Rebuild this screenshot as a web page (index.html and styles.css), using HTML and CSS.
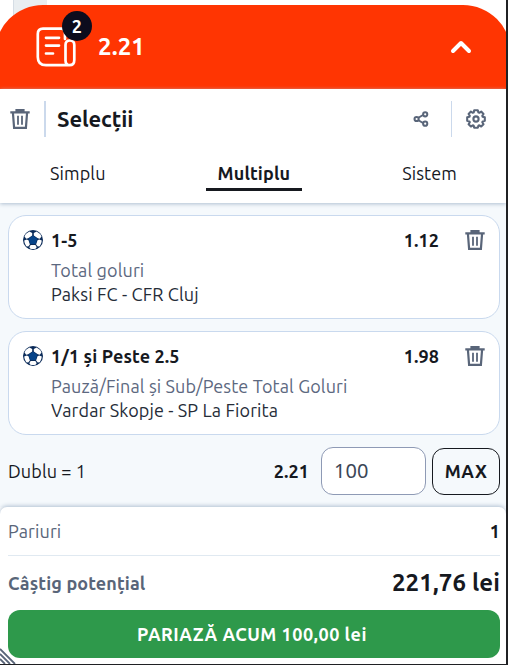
FILE: index.html
```
<!DOCTYPE html>
<html lang="ro">
<head>
    <meta charset="UTF-8">
    <meta name="viewport" content="width=device-width, initial-scale=1.0">
    <title>Bilet</title>
    <link rel="stylesheet" href="styles.css">
</head>
<body>
    <svg class="defs" width="0" height="0">
        <symbol id="trash" viewBox="0 0 20 20">
            <path d="M0.3 3.3H19.7M6.5 3V1.1H13.5V3M2.9 3.5L4.1 18.8H15.9L17.1 3.5" fill="none" stroke="currentColor" stroke-width="2.2"/>
            <path d="M8 6.8V15.8M12 6.8V15.8" fill="none" stroke="currentColor" stroke-width="1.8"/>
        </symbol>
        <symbol id="ball" viewBox="0 0 20 20">
            <circle cx="10" cy="10" r="10" fill="#0a2a58"/>
            <g fill="#fff">
                <path d="M10.8 3L13.6 1.5Q17 3.1 18.5 6.4L16.8 8.8L14.8 8.3L10.8 5.4Z"/>
                <path d="M9.2 3L6.4 1.5Q3 3.1 1.5 6.4L3.2 8.8L5.2 8.3L9.2 5.4Z"/>
                <path d="M1.2 10.6L3.8 9.6L5.5 10.3L6.9 14.4L5.2 16.5L3.2 16.2Q1.3 13.6 1.2 10.6Z"/>
                <path d="M18.8 10.6L16.2 9.6L14.5 10.3L13.1 14.4L14.8 16.5L16.8 16.2Q18.7 13.6 18.8 10.6Z"/>
                <path d="M7.6 14.9H12.4L13.7 17.2L12.6 18.7Q10 19.3 7.4 18.7L6.3 17.2Z"/>
            </g>
            <path d="M10 5.6L14.3 8.8L12.7 13.9H7.3L5.7 8.8Z" fill="#074489"/>
        </symbol>
    </svg>

    <div class="betslip">
        <div class="page-behind"></div>
        <header class="slip-header">
            <div class="slip-icon">
                <svg width="40" height="40" viewBox="0 0 40 40" fill="none" stroke="#fff" stroke-width="2.7" stroke-linecap="round" stroke-linejoin="round">
                    <path d="M29 12V5.5Q29 1.7 25 1.7H7Q1.8 1.7 1.8 7V30Q1.8 38.2 10 38.2H33.5Q38.3 38.2 38.3 33V18Q38.3 13.5 34 13.5Q29.5 13.5 29.5 18V33.5Q29.5 38.2 34 38.2"/>
                    <path d="M10 10.8H23M10 18.6H23M10 26.5H17"/>
                </svg>
                <span class="count">2</span>
            </div>
            <span class="header-odds">2.21</span>
            <svg class="chevron" width="22" height="14" viewBox="0 0 22 14"><path d="M3 11L11 3L19 11" fill="none" stroke="#fff" stroke-width="4" stroke-linecap="round" stroke-linejoin="round"/></svg>
        </header>

        <div class="top">
            <div class="toolbar">
                <svg class="icon" width="20" height="20"><use href="#trash"/></svg>
                <h1>Selecții</h1>
                <svg class="icon share" width="16" height="16" viewBox="0 0 16 16" fill="none" stroke="currentColor" stroke-width="2"><path d="M5 7L10 4M5 9L10 12"/><circle cx="3.6" cy="8" r="2.1"/><circle cx="12.2" cy="3.3" r="2.1"/><circle cx="12.2" cy="12.7" r="2.1"/></svg>
                <div class="settings">
                    <svg class="icon" width="20" height="20" viewBox="0 0 20 20" fill="none" stroke="currentColor" stroke-width="2.1" stroke-linejoin="round"><path d="M8.2 1.2H11.8L12.4 3.4L13.3 3.8L15.2 2.6L17.5 4.9L16.3 6.8L16.7 7.7L18.8 8.2V11.8L16.7 12.4L16.3 13.3L17.5 15.2L15.2 17.5L13.3 16.3L12.4 16.7L11.8 18.8H8.2L7.7 16.7L6.8 16.3L4.9 17.5L2.6 15.2L3.8 13.3L3.4 12.4L1.2 11.8V8.2L3.4 7.7L3.8 6.8L2.6 4.9L4.9 2.6L6.8 3.8L7.7 3.4Z"/><circle cx="10" cy="10" r="2.6"/></svg>
                </div>
            </div>
            <nav class="tabs">
                <a><span>Simplu</span></a>
                <a class="active"><span>Multiplu</span></a>
                <a><span>Sistem</span></a>
            </nav>
        </div>

        <div class="selections">
            <div class="card">
                <svg class="ball" width="20" height="20"><use href="#ball"/></svg>
                <div class="info">
                    <div class="pick">1-5</div>
                    <div class="market">Total goluri</div>
                    <div class="match">Paksi FC - CFR Cluj</div>
                </div>
                <div class="odds">1.12</div>
                <svg class="icon" width="20" height="20"><use href="#trash"/></svg>
            </div>
            <div class="card">
                <svg class="ball" width="20" height="20"><use href="#ball"/></svg>
                <div class="info">
                    <div class="pick">1/1 și Peste 2.5</div>
                    <div class="market">Pauză/Final și Sub/Peste Total Goluri</div>
                    <div class="match">Vardar Skopje - SP La Fiorita</div>
                </div>
                <div class="odds">1.98</div>
                <svg class="icon" width="20" height="20"><use href="#trash"/></svg>
            </div>
            <div class="stake-row">
                <span class="combo">Dublu = 1</span>
                <span class="odds">2.21</span>
                <input class="stake" type="text" value="100">
                <button class="max">MAX</button>
            </div>
        </div>

        <footer class="summary">
            <div class="bets"><span class="bets-label">Pariuri</span><b>1</b></div>
            <div class="win"><span class="win-label">Câștig potențial</span><span class="win-value">221,76 lei</span></div>
            <button class="place-bet">PARIAZĂ ACUM 100,00 lei</button>
            <svg class="grip" width="16" height="16" viewBox="0 0 16 16" stroke="#596579" stroke-width="1.8"><path d="M0 1L15 16M0 6L10 16M0 11L5 16"/></svg>
        </footer>
    </div>
</body>
</html>
```

FILE: styles.css
```
* {
    box-sizing: border-box;
}
body {
    margin: 0;
    height: 665px;
    background-color: #202124;
    font-family: Ubuntu, "Noto Sans", sans-serif;
    font-size: 18px;
    letter-spacing: 0.12px;
    color: #16191f;
    overflow: hidden;
}
.defs {
    position: absolute;
}
.betslip {
    position: relative;
    display: flex;
    flex-direction: column;
    width: 506px;
    height: 664px;
    padding-top: 5px;
    background-color: #fff;
    overflow: hidden;
}
/* strip of the page that shows above the slip */
.page-behind {
    position: absolute;
    top: 0;
    left: 13px;
    width: 34px;
    height: 40px;
    background-color: #e9eef1;
    border-left: 1px solid #d5dde5;
}
.slip-header {
    position: relative;
    display: flex;
    align-items: center;
    flex: none;
    height: 84px;
    margin: 0 -5px;
    padding: 0 39px 0 41px;
    border-radius: 48px 48px 0 0;
    background-color: #ff3502;
    color: #fff;
}
.slip-icon {
    position: relative;
    width: 40px;
    height: 40px;
}
.count {
    position: absolute;
    top: -16px;
    left: 26px;
    width: 30px;
    height: 30px;
    border-radius: 50%;
    background-color: #0c0c1d;
    font-size: 18px;
    font-weight: bold;
    line-height: 31px;
    text-align: center;
}
.header-odds {
    margin: -2px 0 0 22px;
    font-size: 24px;
    font-weight: bold;
}
.chevron {
    margin-left: auto;
}
.icon {
    display: block;
    flex: none;
    color: #596579;
}
.top {
    position: relative;
    flex: none;
    height: 114px;
    background-color: #fff;
    box-shadow: 0 1px 4px #aebed0;
    z-index: 1;
}
.toolbar {
    display: flex;
    align-items: center;
    height: 60px;
    padding-left: 10px;
}
h1 {
    height: 36px;
    margin: 0 auto 0 14px;
    padding-left: 11px;
    border-left: 2px solid #cbd9ec;
    font-size: 22px;
    line-height: 35px;
    letter-spacing: -0.1px;
}
.share {
    margin-right: 22px;
}
.settings {
    display: flex;
    align-items: center;
    height: 36px;
    padding: 0 20px 0 14px;
    border-left: 1px solid #cbd9ec;
}
.tabs {
    display: flex;
    justify-content: space-between;
    padding: 9px 37px 0 38px;
}
.tabs a {
    height: 33px;
    padding: 0 12px;
    line-height: 30px;
}
.tabs .active {
    border-bottom: 3px solid #16191f;
    font-weight: bold;
}
.selections {
    display: flex;
    flex-direction: column;
    gap: 12px;
    flex: none;
    height: 304px;
    padding: 12px 6px 0 8px;
    background-color: #f5f9fc;
}
.card {
    display: flex;
    align-items: flex-start;
    height: 104px;
    padding: 14px;
    border: 1px solid #c9d9ee;
    border-radius: 18px;
    background-color: #fff;
}
.info {
    flex: 1;
    margin-left: 8px;
    white-space: nowrap;
}
.pick {
    height: 28px;
    font-weight: bold;
    line-height: 20px;
}
.market,
.match {
    height: 24px;
    line-height: 24px;
}
.market {
    color: #5c6880;
}
.match {
    color: #252c38;
}
.odds {
    font-weight: bold;
    line-height: 20px;
}
.card .odds {
    margin-right: 26px;
}
.stake-row {
    display: flex;
    align-items: center;
    height: 48px;
}
.combo {
    margin-right: auto;
}
.stake {
    width: 105px;
    height: 48px;
    margin: 0 6px 0 12px;
    padding: 0 12px 2px;
    border: 1px solid #8e9ab5;
    border-radius: 12px;
    background-color: #fff;
    color: #3b4656;
    font-family: "Noto Sans", sans-serif;
    font-size: 20px;
}
.max {
    width: 68px;
    height: 47px;
    margin-top: 1px;
    padding: 0 0 2px;
    border: 1px solid #16191f;
    border-radius: 12px;
    background-color: transparent;
    color: #16191f;
    font-family: inherit;
    font-size: 18px;
    font-weight: bold;
    letter-spacing: 0.5px;
}
.summary {
    position: relative;
    flex: 1;
    padding: 0 6px 0 8px;
    border-radius: 7px 7px 0 0;
    background-color: #fff;
    box-shadow: 0 -1px 4px #aebed0;
}
.bets,
.win {
    display: flex;
    align-items: center;
    justify-content: space-between;
}
.bets {
    height: 49px;
    border-bottom: 1px solid #e0e9f1;
}
.bets-label,
.win-label {
    color: #596579;
}
.win {
    height: 54px;
}
.win-label {
    font-weight: bold;
}
.win-value {
    margin-top: -2px;
    font-size: 24px;
    font-weight: bold;
    letter-spacing: 0.1px;
}
.place-bet {
    display: block;
    width: 100%;
    height: 48px;
    padding: 0 4px 0 0;
    border: none;
    border-radius: 12px;
    background-color: #2e994b;
    color: #fff;
    font-family: inherit;
    font-size: 18px;
    font-weight: 600;
    letter-spacing: 0.5px;
}
.grip {
    position: absolute;
    left: 0;
    bottom: 0;
}
```
